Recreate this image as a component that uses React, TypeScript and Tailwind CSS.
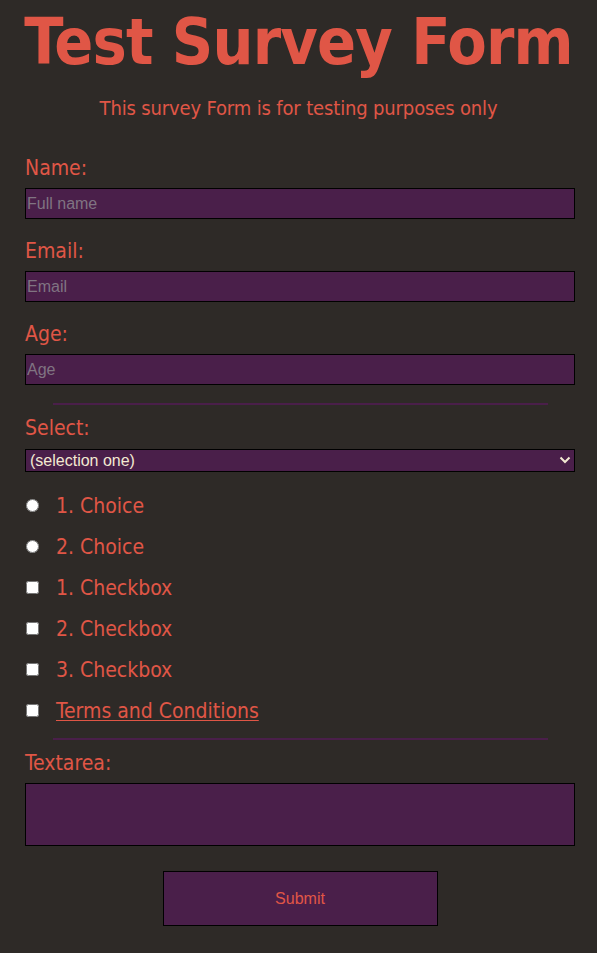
import React from "react";

const labelCls = "block text-[21px] leading-[24px] text-[#e05646]";
const inputCls =
  "block w-full h-[31px] border border-black bg-[#4a1f4a] px-[1px] text-[16px] text-[#f3e9d2] font-['Liberation_Sans',Arial,sans-serif] outline-none placeholder:text-[#807482]";

function Field({ label, placeholder, type = "text" }: { label: string; placeholder: string; type?: string }) {
  return (
    <div className="mb-[20px]">
      <label className={labelCls}>{label}</label>
      <input type={type} placeholder={placeholder} className={`${inputCls} mt-[8px]`} />
    </div>
  );
}

function Option({ type, label, name }: { type: "radio" | "checkbox"; label: React.ReactNode; name?: string }) {
  return (
    <label className="flex h-[41px] items-center">
      <input type={type} name={name} className="m-0 ml-[1px] h-[13px] w-[13px]" />
      <span className="ml-[17px] text-[21px] leading-[24px] text-[#e05646]">{label}</span>
    </label>
  );
}

export default function App() {
  return (
    <div className="min-h-screen bg-[#2e2a27] font-['DejaVu_Sans_Condensed',Tahoma,'DejaVu_Sans',sans-serif]">
      <div className="pt-[10px] pb-[27px]">
        <h1 className="text-center text-[64px] font-bold leading-[64px] tracking-[-0.8px] text-[#e05646]">
          Test Survey Form
        </h1>
        <p className="mt-[22px] text-center text-[20px] leading-[24px] tracking-[-0.15px] text-[#e05646]">
          This survey Form is for testing purposes only
        </p>

        <form className="ml-[25px] mt-[36px] w-[550px]">
          <Field label="Name:" placeholder="Full name" />
          <Field label="Email:" placeholder="Email" type="email" />
          <Field label="Age:" placeholder="Age" type="number" />

          <hr className="mx-auto -mt-[2px] mb-[11px] w-[495px] border-0 border-t-2 border-[#4a1f4a]" />

          <label className={labelCls}>Select:</label>
          <div className="relative mt-[9px]">
            <select className="block h-[23px] w-full appearance-none border border-black bg-[#4a1f4a] pl-[4px] text-[16px] leading-[20px] text-[#f3e9d2] font-['Liberation_Sans',Arial,sans-serif] outline-none">
              <option>(selection one)</option>
              <option>(selection two)</option>
            </select>
            <svg
              className="pointer-events-none absolute right-[4px] top-[6px]"
              width="12"
              height="10"
              viewBox="0 0 12 10"
              fill="none"
              stroke="#f3e9d2"
              strokeWidth="2"
            >
              <path d="M1.5 2.5 6 7l4.5-4.5" />
            </svg>
          </div>

          <div className="mt-[13px]">
            <Option type="radio" name="choice" label="1. Choice" />
            <Option type="radio" name="choice" label="2. Choice" />
            <Option type="checkbox" label="1. Checkbox" />
            <Option type="checkbox" label="2. Checkbox" />
            <Option type="checkbox" label="3. Checkbox" />
            <Option
              type="checkbox"
              label={
                <a href="#" className="underline decoration-1 underline-offset-[2px]">
                  Terms and Conditions
                </a>
              }
            />
          </div>

          <hr className="mx-auto mt-[7px] mb-[11px] w-[495px] border-0 border-t-2 border-[#4a1f4a]" />

          <label className={labelCls}>Textarea:</label>
          <textarea className="mt-[8px] block h-[63px] w-full resize-none border border-black bg-[#4a1f4a] text-[#f3e9d2] outline-none" />

          <div className="mt-[25px] flex justify-center">
            <button
              type="submit"
              className="h-[55px] w-[275px] border border-black bg-[#4a1f4a] text-[16px] text-[#e05646] font-['Liberation_Sans',Arial,sans-serif]"
            >
              Submit
            </button>
          </div>
        </form>
      </div>
    </div>
  );
}
